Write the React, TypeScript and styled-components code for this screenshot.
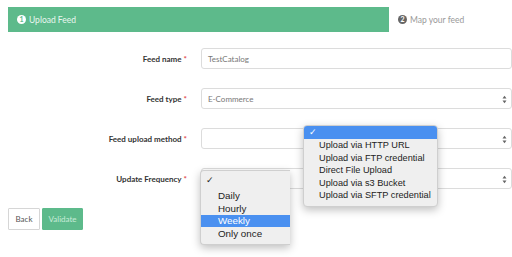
import React from "react";
import styled, { createGlobalStyle } from "styled-components";

const Global = createGlobalStyle`
  html, body { margin: 0; padding: 0; background: #fff; }
  body { font-family: Lato, "Open Sans", "Liberation Sans", sans-serif; }
  * { box-sizing: border-box; }
`;

const Page = styled.div`
  position: relative;
  width: 512px;
  height: 257px;
  overflow: hidden;
  padding: 7px 0 0 8px;
`;

const Steps = styled.div`
  display: flex;
  align-items: center;
  height: 25px;
`;

const ActiveStep = styled.div`
  width: 381px;
  height: 25px;
  background: #5dba8b;
  display: flex;
  align-items: center;
  padding-left: 9px;
  gap: 3px;
  color: #eaf7f0;
  font-size: 8.5px;
`;

const Circle = styled.span<{ $active?: boolean }>`
  width: 9px;
  height: 9px;
  border-radius: 50%;
  background: ${(p) => (p.$active ? "#fff" : "#666")};
  color: ${(p) => (p.$active ? "#5dba8b" : "#fff")};
  font-size: 7px;
  font-weight: 700;
  display: inline-flex;
  align-items: center;
  justify-content: center;
  line-height: 1;
`;

const NextStep = styled.div`
  display: flex;
  align-items: center;
  gap: 3px;
  margin-left: 9px;
  color: #9a9a9a;
  font-size: 8.5px;
`;

const Form = styled.div`
  display: flex;
  flex-direction: column;
  gap: 19px;
  margin-top: 16px;
`;

const Row = styled.div`
  display: flex;
  align-items: center;
  height: 21px;
`;

const Label = styled.div`
  width: 193px;
  text-align: right;
  padding-right: 14px;
  font-size: 8px;
  font-weight: 700;
  color: #333;
`;

const Star = styled.span`
  color: #e0474c;
  margin-left: 2px;
`;

const Field = styled.div`
  position: relative;
  width: 311px;
  height: 21px;
  border: 1px solid #dcdcdc;
  border-radius: 3px;
  background: #fff;
  display: flex;
  align-items: center;
  padding-left: 6px;
  font-size: 8px;
  color: #777;
`;

const Arrows = styled.svg`
  position: absolute;
  right: 4px;
  top: 6px;
`;

const Buttons = styled.div`
  display: flex;
  gap: 2px;
  margin-top: 19px;
`;

const Button = styled.div<{ $primary?: boolean }>`
  height: 22px;
  width: ${(p) => (p.$primary ? "41px" : "32px")};
  display: flex;
  align-items: center;
  justify-content: center;
  font-size: 8px;
  border: 1px solid ${(p) => (p.$primary ? "#5dba8b" : "#d6d6d6")};
  background: ${(p) => (p.$primary ? "#5dba8b" : "#fff")};
  color: ${(p) => (p.$primary ? "#c9ecd9" : "#555")};
  border-radius: 1px;
`;

const Menu = styled.div<{ $left: number; $top: number; $width: number }>`
  position: absolute;
  left: ${(p) => p.$left}px;
  top: ${(p) => p.$top}px;
  width: ${(p) => p.$width}px;
  background: #efefef;
  border: 1px solid #cfcfcf;
  border-radius: 4px;
  box-shadow: 0 3px 8px rgba(0, 0, 0, 0.25);
  padding: 0 0 4px;
  font-family: "Liberation Sans", Arial, sans-serif;
  font-size: 9.2px;
  color: #222;
  overflow: hidden;
`;

const FreqMenu = styled(Menu)`
  border-right: none;
  border-radius: 4px 0 0 4px;
  padding-top: 1px;
  font-size: 9.8px;
`;

const Item = styled.div<{ $selected?: boolean; $h: number; $indent: number }>`
  height: ${(p) => p.$h}px;
  line-height: ${(p) => p.$h}px;
  padding-left: ${(p) => p.$indent}px;
  background: ${(p) => (p.$selected ? "#4a90f0" : "transparent")};
  color: ${(p) => (p.$selected ? "#fff" : "#222")};
  white-space: nowrap;
`;

const Check = styled.div<{ $selected?: boolean; $h: number }>`
  height: ${(p) => p.$h}px;
  line-height: ${(p) => p.$h}px;
  padding-left: 5px;
  background: ${(p) => (p.$selected ? "#4a90f0" : "transparent")};
  color: ${(p) => (p.$selected ? "#fff" : "#222")};
  font-family: "DejaVu Sans", sans-serif;
  font-size: 9px;
  font-weight: 700;
`;

const SelectArrows = () => (
  <Arrows width="5" height="9" viewBox="0 0 5 9">
    <path d="M0.5 3.5 L2.5 0.8 L4.5 3.5 Z" fill="#666" />
    <path d="M0.5 5.5 L2.5 8.2 L4.5 5.5 Z" fill="#666" />
  </Arrows>
);

export default function App() {
  return (
    <Page>
      <Global />
      <Steps>
        <ActiveStep>
          <Circle $active>1</Circle>
          Upload Feed
        </ActiveStep>
        <NextStep>
          <Circle>2</Circle>
          Map your feed
        </NextStep>
      </Steps>
      <Form>
        <Row>
          <Label>
            Feed name<Star>*</Star>
          </Label>
          <Field>TestCatalog</Field>
        </Row>
        <Row>
          <Label>
            Feed type<Star>*</Star>
          </Label>
          <Field>
            E-Commerce
            <SelectArrows />
          </Field>
        </Row>
        <Row>
          <Label>
            Feed upload method<Star>*</Star>
          </Label>
          <Field>
            <SelectArrows />
          </Field>
        </Row>
        <Row>
          <Label>
            Update Frequency<Star>*</Star>
          </Label>
          <Field>
            <SelectArrows />
          </Field>
        </Row>
      </Form>
      <Buttons>
        <Button>Back</Button>
        <Button $primary>Validate</Button>
      </Buttons>

      <FreqMenu $left={200} $top={170} $width={90}>
        <Check $h={17}>✓</Check>
        <Item $h={13} $indent={17}>Daily</Item>
        <Item $h={13} $indent={17}>Hourly</Item>
        <Item $h={12} $indent={17} $selected>Weekly</Item>
        <Item $h={13} $indent={17}>Only once</Item>
      </FreqMenu>

      <Menu $left={303} $top={125} $width={135}>
        <Check $h={13} $selected>✓</Check>
        <Item $h={12.5} $indent={15}>Upload via HTTP URL</Item>
        <Item $h={12.5} $indent={15}>Upload via FTP credential</Item>
        <Item $h={12.5} $indent={15}>Direct File Upload</Item>
        <Item $h={12.5} $indent={15}>Upload via s3 Bucket</Item>
        <Item $h={12.5} $indent={15}>Upload via SFTP credential</Item>
      </Menu>
    </Page>
  );
}
